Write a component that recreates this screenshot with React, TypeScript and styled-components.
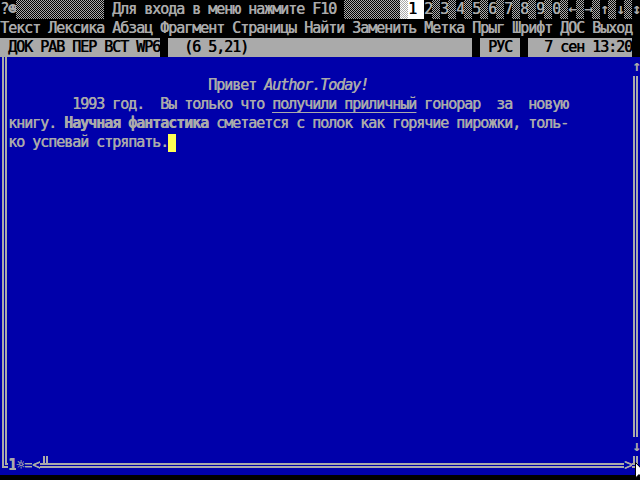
import React from "react";
import styled, { createGlobalStyle, css } from "styled-components";

const GRAY = "#aaaaaa";
const BLUE = "#0000aa";
const YELLOW = "#ffff55";

const GlobalStyle = createGlobalStyle`
  html, body {
    margin: 0;
    padding: 0;
    background: #000;
  }
  body {
    font-family: "DejaVu Sans Mono", "Liberation Mono", monospace;
  }
`;

// 80x25 text screen: every cell is 8px wide, every row 19px high
const Screen = styled.div`
  position: relative;
  width: 640px;
  height: 480px;
  overflow: hidden;
  background: #000;
  color: ${GRAY};
  font-size: 15px;
  letter-spacing: -1.03px;
  line-height: 19px;
  text-shadow: 0.4px 0 0 currentColor;
`;

const Bar = styled.div`
  display: flex;
  height: 19px;
  white-space: pre;
`;

const Cell = styled.span<{ $w?: number; $inverse?: boolean }>`
  flex: none;
  width: ${(p) => (p.$w ?? 1) * 8}px;
  height: 19px;
  ${(p) =>
    p.$inverse &&
    css`
      background: #fff;
      color: #000;
    `}
`;

const Dither = styled.span<{ $w?: number; $light?: boolean }>`
  flex: none;
  width: ${(p) => (p.$w ?? 1) * 8}px;
  height: 19px;
  background: repeating-conic-gradient(
      ${(p) => (p.$light ? "#fff" : GRAY)} 0% 25%,
      ${(p) => (p.$light ? GRAY : "#000")} 0% 50%
    )
    0 0 / 2px 2px;
`;

const Seg = styled.span<{ $w: number }>`
  flex: none;
  width: ${(p) => p.$w * 8}px;
  background: ${GRAY};
  color: #000;
`;

const Gap = styled.span`
  flex: none;
  width: 8px;
`;

const Window = styled.div`
  display: grid;
  grid-template-columns: 8px 624px 8px;
  grid-template-rows: 399px 19px;
  background: ${BLUE};
`;

const LeftRail = styled.div`
  background: linear-gradient(
    to right,
    transparent 2px,
    ${GRAY} 2px 4px,
    transparent 4px 5px,
    ${GRAY} 5px 7px,
    transparent 7px
  );
`;

const Editor = styled.div`
  padding-top: 19px;
  white-space: pre;
`;

const Line = styled.div`
  height: 19px;
`;

const Italic = styled.i`
  font-style: italic;
`;

const Bold = styled.b`
  font-weight: bold;
`;

const Under = styled.span`
  text-decoration: underline;
  text-decoration-thickness: 1px;
  text-underline-offset: 3px;
`;

const Caret = styled.span`
  display: inline-block;
  width: 8px;
  height: 18px;
  margin-top: 1px;
  vertical-align: top;
  background: ${YELLOW};
`;

const RightRail = styled.div`
  display: flex;
  flex-direction: column;
`;

const Arrow = styled.div`
  height: 19px;
  text-align: center;
`;

const RailLine = styled.div`
  flex: 1;
  background: linear-gradient(
    to right,
    transparent 1px,
    ${GRAY} 1px 3px,
    transparent 3px 4px,
    ${GRAY} 4px 6px,
    transparent 6px
  );
`;

const FrameRow = styled.div`
  grid-column: 1 / -1;
  display: flex;
  height: 19px;
  white-space: pre;
`;

const hLines = css`
  background: linear-gradient(
    to bottom,
    transparent 7px,
    ${GRAY} 7px 9px,
    transparent 9px 10px,
    ${GRAY} 10px 12px,
    transparent 12px
  );
`;

const Corner = styled.span<{ $side: "left" | "right" }>`
  position: relative;
  flex: none;
  width: 8px;
  height: 19px;

  &::before,
  &::after {
    content: "";
    position: absolute;
    top: 0;
    box-sizing: border-box;
    border-bottom: 2px solid ${GRAY};
    ${(p) =>
      p.$side === "left"
        ? css`border-left: 2px solid ${GRAY};`
        : css`border-right: 2px solid ${GRAY};`}
  }
  &::before {
    ${(p) => (p.$side === "left" ? "left: 2px;" : "left: 0;")}
    width: 6px;
    height: 12px;
  }
  &::after {
    ${(p) => (p.$side === "left" ? "left: 5px;" : "left: 0;")}
    width: 3px;
    height: 9px;
  }
`;

const Thumb = styled.span`
  position: relative;
  flex: none;
  width: 8px;
  height: 19px;
  ${hLines}

  &::before {
    content: "";
    position: absolute;
    left: 3px;
    top: 0;
    width: 5px;
    height: 7px;
    box-sizing: border-box;
    border-left: 2px solid ${GRAY};
    border-right: 2px solid ${GRAY};
  }
`;

const HLine = styled.span`
  flex: 1;
  height: 19px;
  ${hLines}
`;

const Glyph = styled.span<{ $bold?: boolean }>`
  flex: none;
  width: 8px;
  height: 19px;
  overflow: hidden;
  text-align: center;
  font-weight: ${(p) => (p.$bold ? "bold" : "normal")};
`;

const Pointer = styled.svg`
  position: absolute;
  left: 635px;
  top: 462px;
`;

const keys = ["2", "3", "4", "5", "6", "7", "8", "9", "0", "←", "→", "↑", "↓", "↕"];

const App: React.FC = () => {
  return (
    <>
      <GlobalStyle />
      <Screen>
        <Bar>
          <Cell>?</Cell>
          <Cell>☻</Cell>
          <Dither $w={11} />
          <Cell />
          <Cell $w={28}>Для входа в меню нажмите F10</Cell>
          <Cell />
          <Dither $w={7} />
          <Dither $light />
          <Cell $w={2} $inverse>
            1
          </Cell>
          {keys.map((k, i) => (
            <React.Fragment key={k}>
              {i > 0 && <Dither />}
              <Cell>{k}</Cell>
            </React.Fragment>
          ))}
        </Bar>

        <Bar>Текст Лексика Абзац Фрагмент Страницы Найти Заменить Метка Прыг Шрифт ДОС Выход</Bar>

        <Bar>
          <Seg $w={20}> ДОК РАВ ПЕР ВСТ WP6</Seg>
          <Gap />
          <Seg $w={38}>  (6 5,21)</Seg>
          <Gap />
          <Seg $w={5}> РУС </Seg>
          <Gap />
          <Seg $w={13}>  7 сен 13:20</Seg>
          <Gap />
        </Bar>

        <Window>
          <LeftRail />
          <Editor>
            <Line>
              {"                         Привет "}
              <Italic>Author.Today!</Italic>
            </Line>
            <Line>
              {"        1993 год.  Вы только что "}
              <Under>получили приличный</Under>
              {" гонорар  за  новую"}
            </Line>
            <Line>
              {"книгу. "}
              <Bold>Научная фантастика</Bold>
              {" сметается с полок как горячие пирожки, толь-"}
            </Line>
            <Line>
              {"ко успевай стряпать."}
              <Caret />
            </Line>
          </Editor>
          <RightRail>
            <Arrow>↑</Arrow>
            <RailLine />
            <Arrow>↓</Arrow>
          </RightRail>
          <FrameRow>
            <Corner $side="left" />
            <Glyph $bold>1</Glyph>
            <Glyph>☼</Glyph>
            <Glyph>=</Glyph>
            <Glyph>&lt;</Glyph>
            <Thumb />
            <HLine />
            <Glyph>&gt;</Glyph>
            <Corner $side="right" />
          </FrameRow>
        </Window>

        <Pointer width="12" height="19" viewBox="0 0 12 19">
          <path d="M0.5 0.5 L0.5 16 L4 12.5 L6.5 18 L8.5 17 L6 11.5 L11 11.5 Z" fill="#fff" stroke="#000" strokeWidth="1" />
        </Pointer>
      </Screen>
    </>
  );
};

export default App;
